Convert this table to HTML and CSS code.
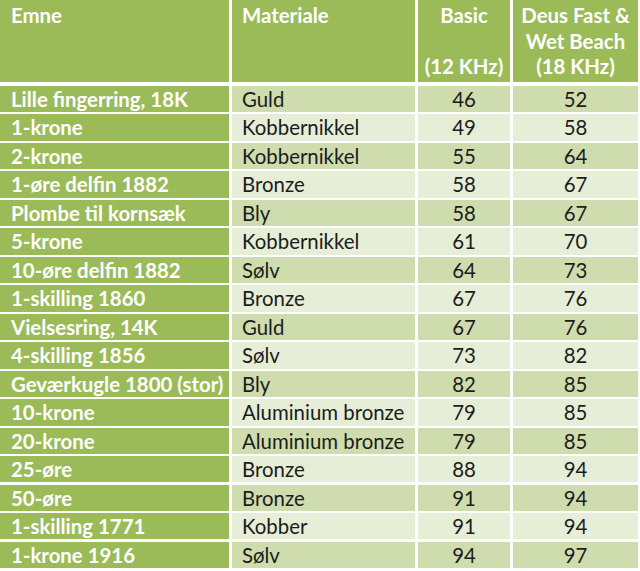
FILE: index.html
```html
<!DOCTYPE html>
<html>
<head>
<meta charset="utf-8">
<link rel="stylesheet" href="styles.css">
</head>
<body>
<div class="table">
  <div class="row head">
    <div class="c c1">Emne</div>
    <div class="c c2">Materiale</div>
    <div class="c c3"><span>Basic</span><span>&nbsp;</span><span>(12 KHz)</span></div>
    <div class="c c4"><span>Deus Fast &amp;</span><span>Wet Beach</span><span>(18 KHz)</span></div>
  </div>
  <div class="row odd"><div class="c c1">Lille fingerring, 18K</div><div class="c c2">Guld</div><div class="c c3">46</div><div class="c c4">52</div></div>
  <div class="row even"><div class="c c1">1-krone</div><div class="c c2">Kobbernikkel</div><div class="c c3">49</div><div class="c c4">58</div></div>
  <div class="row odd"><div class="c c1">2-krone</div><div class="c c2">Kobbernikkel</div><div class="c c3">55</div><div class="c c4">64</div></div>
  <div class="row even"><div class="c c1">1-øre delfin 1882</div><div class="c c2">Bronze</div><div class="c c3">58</div><div class="c c4">67</div></div>
  <div class="row odd"><div class="c c1">Plombe til kornsæk</div><div class="c c2">Bly</div><div class="c c3">58</div><div class="c c4">67</div></div>
  <div class="row even"><div class="c c1">5-krone</div><div class="c c2">Kobbernikkel</div><div class="c c3">61</div><div class="c c4">70</div></div>
  <div class="row odd"><div class="c c1">10-øre delfin 1882</div><div class="c c2">Sølv</div><div class="c c3">64</div><div class="c c4">73</div></div>
  <div class="row even"><div class="c c1">1-skilling 1860</div><div class="c c2">Bronze</div><div class="c c3">67</div><div class="c c4">76</div></div>
  <div class="row odd"><div class="c c1">Vielsesring, 14K</div><div class="c c2">Guld</div><div class="c c3">67</div><div class="c c4">76</div></div>
  <div class="row even"><div class="c c1">4-skilling 1856</div><div class="c c2">Sølv</div><div class="c c3">73</div><div class="c c4">82</div></div>
  <div class="row odd"><div class="c c1">Geværkugle 1800 (stor)</div><div class="c c2">Bly</div><div class="c c3">82</div><div class="c c4">85</div></div>
  <div class="row even"><div class="c c1">10-krone</div><div class="c c2">Aluminium bronze</div><div class="c c3">79</div><div class="c c4">85</div></div>
  <div class="row odd"><div class="c c1">20-krone</div><div class="c c2">Aluminium bronze</div><div class="c c3">79</div><div class="c c4">85</div></div>
  <div class="row even"><div class="c c1">25-øre</div><div class="c c2">Bronze</div><div class="c c3">88</div><div class="c c4">94</div></div>
  <div class="row odd"><div class="c c1">50-øre</div><div class="c c2">Bronze</div><div class="c c3">91</div><div class="c c4">94</div></div>
  <div class="row even"><div class="c c1">1-skilling 1771</div><div class="c c2">Kobber</div><div class="c c3">91</div><div class="c c4">94</div></div>
  <div class="row odd"><div class="c c1">1-krone 1916</div><div class="c c2">Sølv</div><div class="c c3">94</div><div class="c c4">97</div></div>
</div>
</body>
</html>
```

FILE: styles.css
```css
html, body {
  margin: 0;
  padding: 0;
  background: #ffffff;
}
.table {
  width: 638px;
  display: flex;
  flex-direction: column;
  gap: 2.3px;
  font-family: Lato, "Open Sans", sans-serif;
  font-size: 20.4px;
  color: #1c1c1c;
}
.row {
  display: grid;
  grid-template-columns: 229px 183px 92px 125px;
  column-gap: 3px;
  height: 26.2px;
}
.row.head {
  height: 82px;
  margin-bottom: 1.7px;
}
.c {
  line-height: 27px;
  white-space: nowrap;
  overflow: hidden;
}
.c1 {
  background: #9bbb59;
  color: #ffffff;
  font-weight: bold;
  padding-left: 11px;
}
.c2 {
  padding-left: 10px;
}
.c3, .c4 {
  text-align: center;
}
.odd .c2, .odd .c3, .odd .c4 {
  background: #cfddae;
}
.even .c2, .even .c3, .even .c4 {
  background: #e6eed7;
}
.head .c {
  background: #9bbb59;
  color: #ffffff;
  font-weight: bold;
  line-height: 25.5px;
  padding-top: 3px;
}
.head .c3, .head .c4 {
  display: flex;
  flex-direction: column;
  align-items: center;
}
```
